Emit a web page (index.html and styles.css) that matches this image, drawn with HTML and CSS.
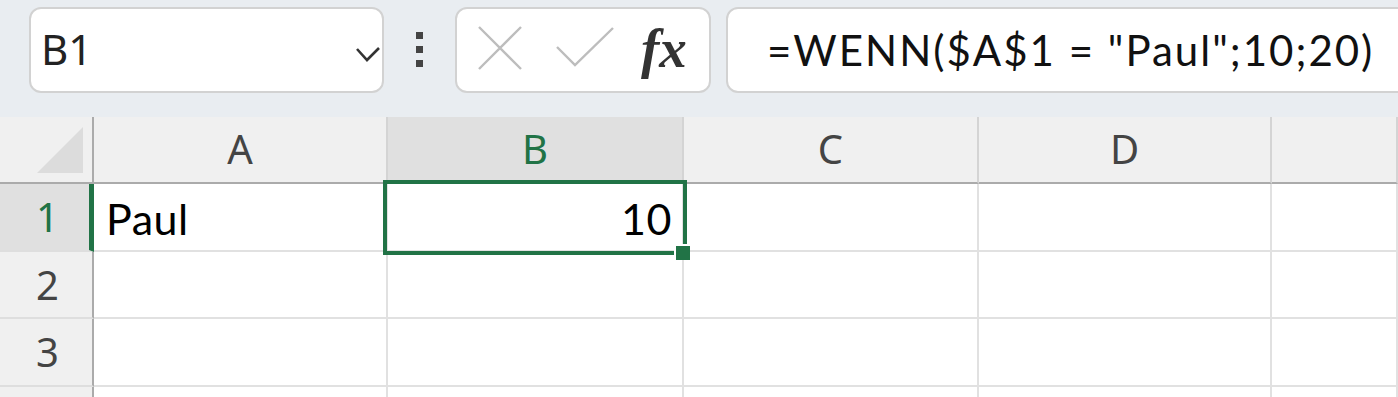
FILE: index.html
```html
<!DOCTYPE html>
<html lang="de">
<head>
    <meta http-equiv="Content-Type" content="text/html; charset=utf-8" />
    <link rel="stylesheet" href="styles.css">
</head>
<body>
    <div class="toolbar">
        <div class="namebox">
            <span class="name">B1</span>
            <svg class="chevron" width="24" height="16" viewBox="0 0 24 16">
                <path d="M1 2 L11 13 L23 1" fill="none" stroke="#333" stroke-width="2.6" />
            </svg>
        </div>
        <div class="more">
            <span></span><span></span><span></span>
        </div>
        <div class="actions">
            <svg class="cancel" width="44" height="44" viewBox="0 0 44 44">
                <path d="M1 1 L43 43 M43 1 L1 43" fill="none" stroke="#bdbdbd" stroke-width="2.4" />
            </svg>
            <svg class="enter" width="58" height="40" viewBox="0 0 58 40">
                <path d="M1 20 L19 38 L57 1" fill="none" stroke="#bdbdbd" stroke-width="2.4" />
            </svg>
            <span class="fx">fx</span>
        </div>
        <div class="formula">=WENN($A$1 = "Paul";10;20)</div>
    </div>

    <div class="sheet">
        <div class="corner"><span class="tri"></span></div>
        <div class="colhead">A</div>
        <div class="colhead active">B</div>
        <div class="colhead">C</div>
        <div class="colhead">D</div>
        <div class="colhead"></div>

        <div class="rowhead active">1</div>
        <div class="cell">Paul</div>
        <div class="cell num current">10
            <div class="selection"></div>
            <div class="handle"></div>
        </div>
        <div class="cell"></div>
        <div class="cell"></div>
        <div class="cell"></div>

        <div class="rowhead">2</div>
        <div class="cell"></div>
        <div class="cell"></div>
        <div class="cell"></div>
        <div class="cell"></div>
        <div class="cell"></div>

        <div class="rowhead">3</div>
        <div class="cell"></div>
        <div class="cell"></div>
        <div class="cell"></div>
        <div class="cell"></div>
        <div class="cell"></div>

        <div class="rowhead last"></div>
        <div class="cell last"></div>
        <div class="cell last"></div>
        <div class="cell last"></div>
        <div class="cell last"></div>
        <div class="cell last"></div>
    </div>
</body>
</html>
```

FILE: styles.css
```css
* {
    padding: 0;
    margin: 0;
    box-sizing: border-box;
}

body {
    background: #fff;
    width: 1398px;
    height: 397px;
    overflow: hidden;
    font-family: "Noto Sans", "Open Sans", sans-serif;
}

/* formula bar */

.toolbar {
    height: 117px;
    background: #e9edf1;
    display: flex;
    align-items: flex-start;
    padding: 7px 0 0 29px;
    overflow: hidden;
}

.namebox,
.actions,
.formula {
    height: 86px;
    background: #fff;
    border: 2px solid #d2d2d2;
    border-radius: 12px;
}

.namebox {
    width: 355px;
    display: flex;
    align-items: center;
    justify-content: space-between;
    padding: 0 2px 0 10px;
}

.name {
    font-size: 42px;
    color: #222;
    line-height: 1;
    margin-top: -2px;
}

.chevron {
    margin-top: 10px;
}

.more {
    width: 71px;
    height: 86px;
    display: flex;
    flex-direction: column;
    align-items: center;
    padding-top: 25px;
    gap: 7px;
}

.more span {
    width: 7px;
    height: 7px;
    background: #444;
}

.actions {
    width: 256px;
    display: flex;
    align-items: center;
    padding: 0 0 0 21px;
}

.cancel {
    margin-top: -4px;
}

.enter {
    margin: -6px 0 0 34px;
}

.fx {
    font-family: "Liberation Serif", serif;
    font-style: italic;
    font-weight: bold;
    font-size: 55px;
    line-height: 1;
    color: #333;
    margin: -4px 0 0 27px;
}

.formula {
    flex: 1;
    margin: 0 -30px 0 15px;
    padding: 0 0 0 39px;
    display: flex;
    align-items: center;
    font-family: "Lato", sans-serif;
    font-size: 42px;
    letter-spacing: 2px;
    color: #111;
    white-space: nowrap;
}

/* sheet grid */

.sheet {
    display: grid;
    grid-template-columns: 94px 294px 296px 295px 293px 1fr;
    grid-template-rows: 67px 68px 67px 68px 10px;
}

.corner,
.colhead {
    background: #f0f0f0;
    border-bottom: 2px solid #ababab;
}

.corner {
    border-right: 2px solid #ababab;
    position: relative;
}

.tri {
    position: absolute;
    right: 9px;
    bottom: 9px;
    width: 0;
    height: 0;
    border-left: 46px solid transparent;
    border-bottom: 46px solid #dcdcdc;
}

.colhead {
    border-right: 2px solid #d4d4d4;
    display: flex;
    align-items: center;
    justify-content: center;
    font-size: 40px;
    color: #444;
    line-height: 1;
    padding-bottom: 2px;
}

.colhead.active {
    background: #e0e0e0;
    color: #217346;
}

.rowhead {
    background: #f0f0f0;
    border-right: 2px solid #ababab;
    border-bottom: 2px solid #dedede;
    display: flex;
    align-items: center;
    justify-content: flex-end;
    padding-right: 33px;
    font-size: 40px;
    color: #444;
    line-height: 1;
}

.rowhead.active {
    background: #e0e0e0;
    color: #217346;
    border-right: 5px solid #217346;
    padding-right: 30px;
}

.cell {
    border-right: 2px solid #e1e1e1;
    border-bottom: 2px solid #e1e1e1;
    display: flex;
    align-items: center;
    padding: 2px 10px 0 12px;
    font-family: "Lato", sans-serif;
    font-size: 43px;
    letter-spacing: 0.5px;
    color: #000;
    line-height: 1;
}

.rowhead.last,
.cell.last {
    border-bottom: none;
}

.cell.num {
    justify-content: flex-end;
    padding-right: 10px;
}

.current {
    position: relative;
}

.selection {
    position: absolute;
    left: -5px;
    top: -4px;
    width: 304px;
    height: 75px;
    border: 4px solid #217346;
}

.handle {
    position: absolute;
    left: 286px;
    top: 60px;
    width: 16px;
    height: 16px;
    background: #217346;
    border: 2px solid #fff;
    border-right: none;
    border-bottom: none;
}
```
